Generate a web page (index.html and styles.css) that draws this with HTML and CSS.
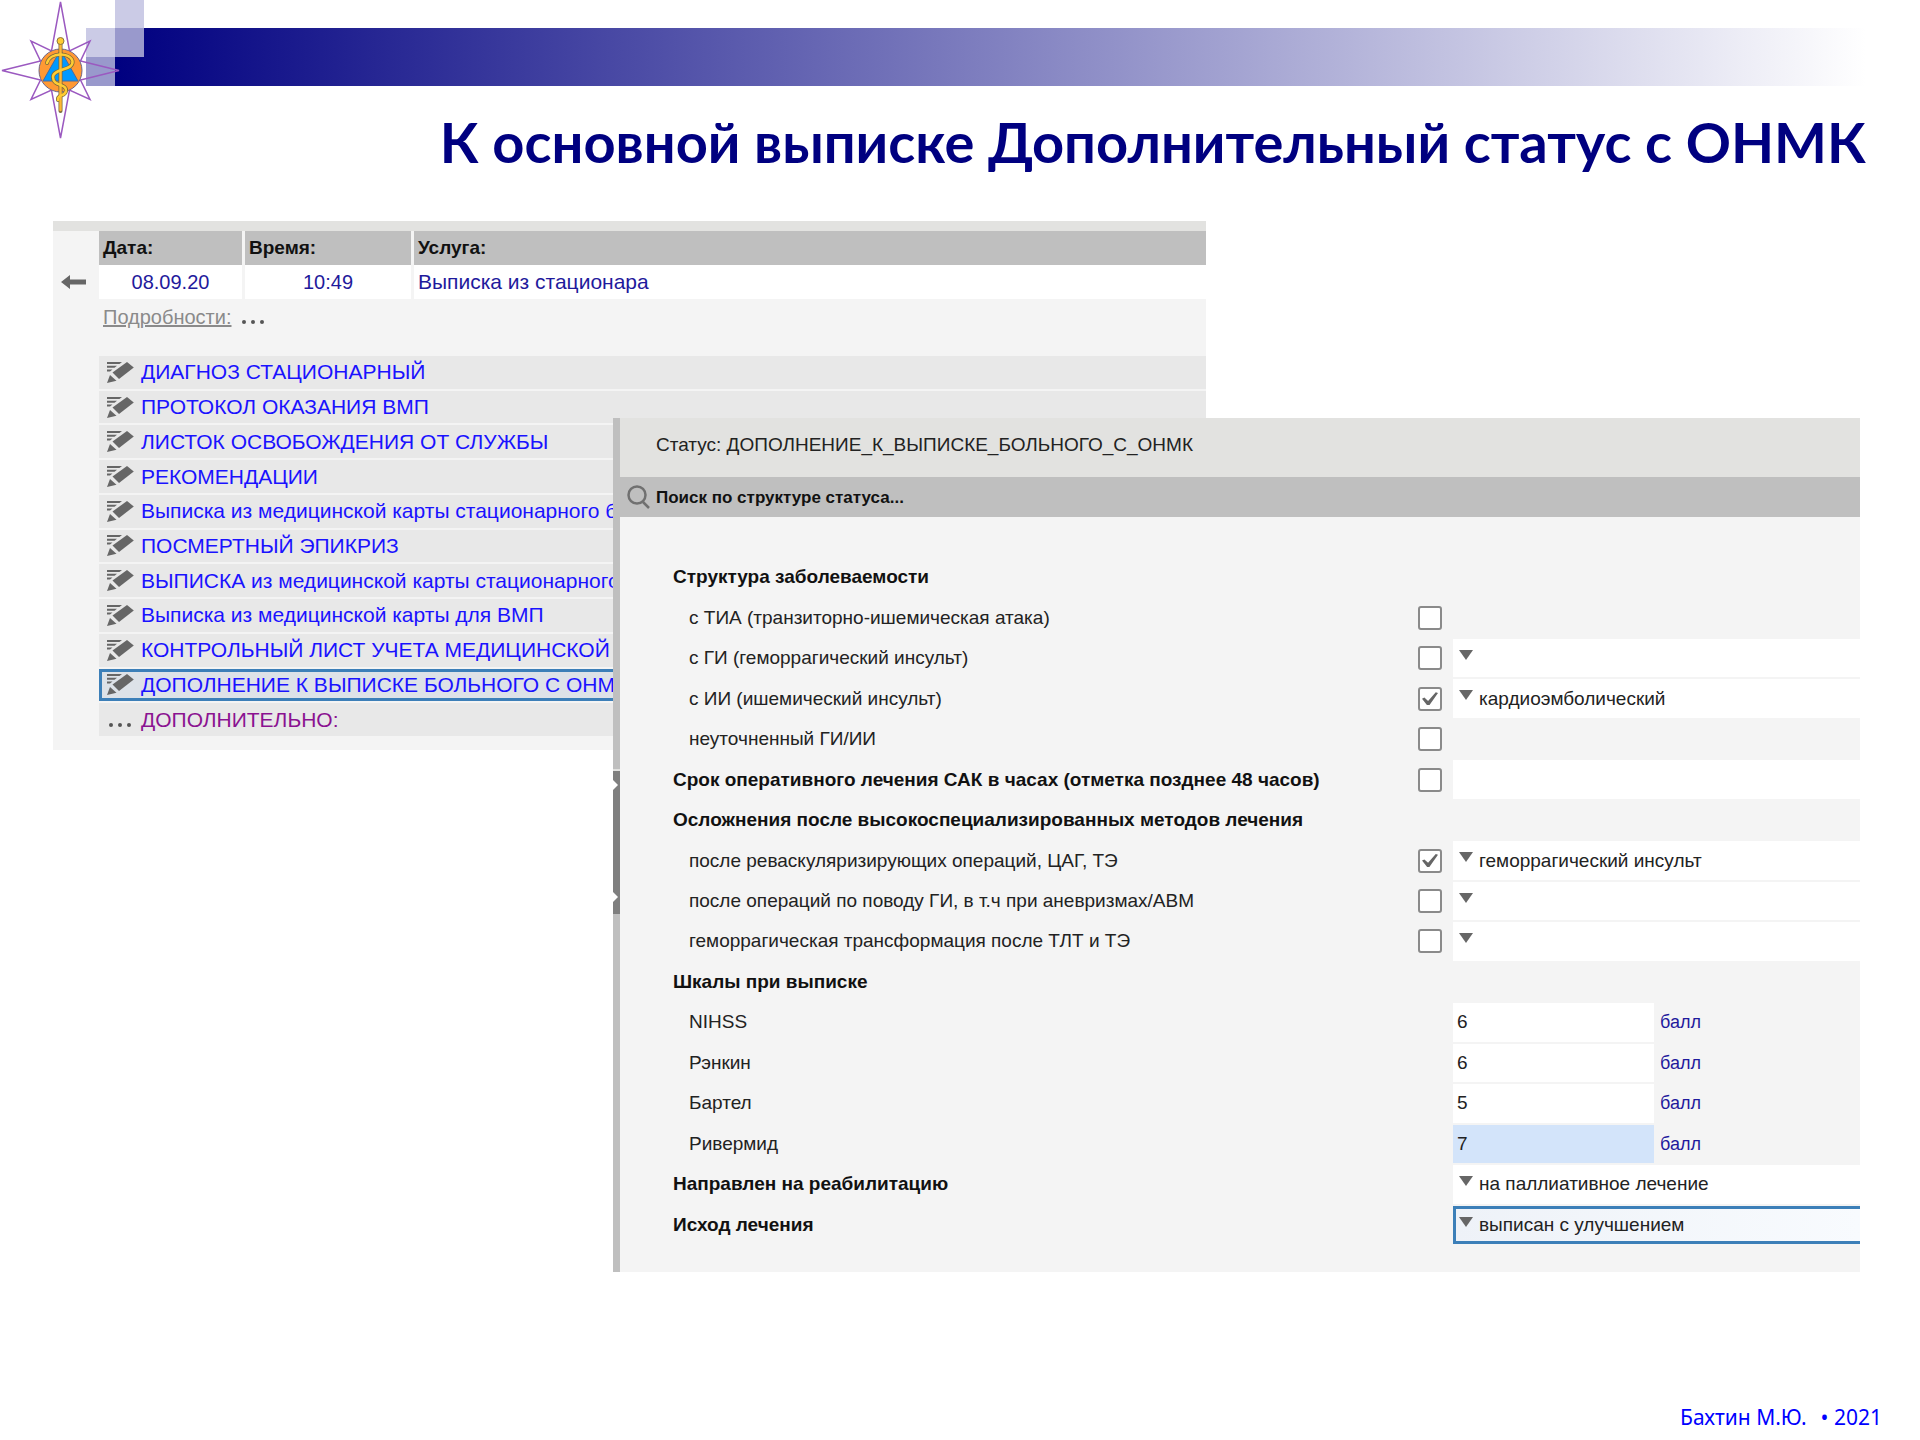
FILE: index.html
```html
<!DOCTYPE html>
<html lang="ru">
<head>
<meta charset="utf-8">
<title>К основной выписке Дополнительный статус с ОНМК</title>
<link rel="stylesheet" href="styles.css">
</head>
<body>
<svg width="0" height="0" class="defs" aria-hidden="true">
  <symbol id="edit" viewBox="0 0 27 21">
    <path d="M0 0h15l-2.500 2H0zM0 3.700h10l-2.500 2H0zM0 7.400h5.500l-2.500 2H0z"/>
    <path d="M20 0L26.800 5.500L12 17L5.500 10.500z"/>
    <path d="M3 13L9.500 18.700L0 21z"/>
  </symbol>
  <symbol id="dots" viewBox="0 0 22 4">
    <circle cx="2" cy="2" r="2"/><circle cx="11" cy="2" r="2"/><circle cx="20" cy="2" r="2"/>
  </symbol>
  <symbol id="caret" viewBox="0 0 14 10"><path d="M0 0h14L7 10z"/></symbol>
</svg>

<header class="masthead">
  <div class="band"></div>
  <i class="sq sq-top"></i><i class="sq sq-left"></i><i class="sq sq-mid"></i><i class="sq sq-low"></i>
  <svg class="logo" viewBox="0 0 121 140" aria-hidden="true">
    <path class="star" d="M60.500 2L69.500 51L90 41L80.500 61L119 70.500L80.500 80L90 99.500L69.500 90L60.500 138L51.500 90L31 99.500L40.500 80L2 70.500L40.500 61L31 41L51.500 51z"/>
    <circle cx="60.500" cy="70.500" r="21.500" fill="#ff9933" stroke="#6b6488"/>
    <path d="M60.500 50L78 81H43z" fill="#0099ff" stroke="#4a6aa0"/>
    <g fill="none" stroke-linecap="round">
      <path d="M60.500 42V111" stroke="#7a6a3c" stroke-width="4"/>
      <path d="M47 63C50 52 70 52 72.500 61C74 71 53 68 53 77C53 87 67 83 66 91C65 97 57 94 58 100" stroke="#7a6a3c" stroke-width="4"/>
      <path d="M60.500 42V110" stroke="#ffb733" stroke-width="2.500"/>
      <path d="M47 63C50 52 70 52 72.500 61C74 71 53 68 53 77C53 87 67 83 66 91C65 97 57 94 58 100" stroke="#ffcc33" stroke-width="2.500"/>
    </g>
    <circle cx="60.500" cy="41" r="3.500" fill="#ffcc33" stroke="#8a7440"/>
  </svg>
</header>

<h1 class="title">К основной выписке Дополнительный статус с ОНМК</h1>

<main class="stage">
  <section class="visit">
    <table class="visit-table">
      <thead><tr><td class="nav"></td><th class="date">Дата:</th><th class="time">Время:</th><th>Услуга:</th></tr></thead>
      <tbody><tr>
        <td class="nav"><button class="back" type="button" aria-label="Назад"><svg width="25" height="14" viewBox="0 0 25 14"><path d="M0 7L9 0V4.500H25V9.500H9V14z"/></svg></button></td>
        <td class="date center">08.09.20</td><td class="time center">10:49</td><td>Выписка из стационара</td>
      </tr></tbody>
    </table>
    <div class="details"><a href="#details">Подробности:</a><svg class="dots"><use href="#dots"/></svg></div>
    <ul class="docs">
      <li><svg class="edit"><use href="#edit"/></svg><a href="#d1">ДИАГНОЗ СТАЦИОНАРНЫЙ</a></li>
      <li><svg class="edit"><use href="#edit"/></svg><a href="#d2">ПРОТОКОЛ ОКАЗАНИЯ ВМП</a></li>
      <li><svg class="edit"><use href="#edit"/></svg><a href="#d3">ЛИСТОК ОСВОБОЖДЕНИЯ ОТ СЛУЖБЫ</a></li>
      <li><svg class="edit"><use href="#edit"/></svg><a href="#d4">РЕКОМЕНДАЦИИ</a></li>
      <li><svg class="edit"><use href="#edit"/></svg><a href="#d5">Выписка из медицинской карты стационарного больного</a></li>
      <li><svg class="edit"><use href="#edit"/></svg><a href="#d6">ПОСМЕРТНЫЙ ЭПИКРИЗ</a></li>
      <li><svg class="edit"><use href="#edit"/></svg><a href="#d7">ВЫПИСКА из медицинской карты стационарного</a></li>
      <li><svg class="edit"><use href="#edit"/></svg><a href="#d8">Выписка из медицинской карты для ВМП</a></li>
      <li><svg class="edit"><use href="#edit"/></svg><a href="#d9">КОНТРОЛЬНЫЙ ЛИСТ УЧЕТА МЕДИЦИНСКОЙ</a></li>
      <li class="current"><svg class="edit"><use href="#edit"/></svg><a href="#d10">ДОПОЛНЕНИЕ К ВЫПИСКЕ БОЛЬНОГО С ОНМК</a></li>
      <li class="more"><svg class="dots"><use href="#dots"/></svg><a href="#d11">ДОПОЛНИТЕЛЬНО:</a></li>
    </ul>
  </section>

  <section class="status">
    <div class="splitter"><div class="grip">
      <svg width="5" height="10" viewBox="0 0 5 10"><path d="M0 0L5 5L0 10z"/></svg>
      <svg width="5" height="10" viewBox="0 0 5 10"><path d="M0 0L5 5L0 10z"/></svg>
    </div></div>
    <form class="status-body">
      <h2 class="status-name">Статус: ДОПОЛНЕНИЕ_К_ВЫПИСКЕ_БОЛЬНОГО_С_ОНМК</h2>
      <div class="search">
        <svg width="24" height="24" viewBox="0 0 24 24"><circle cx="10" cy="10" r="8.500"/><path d="M16 17L22 23"/></svg>
        <input type="text" aria-label="Поиск" placeholder="Поиск по структуре статуса...">
      </div>
      <div class="fields">
        <div class="row"><h3>Структура заболеваемости</h3></div>
        <div class="row"><label class="sub" for="c1">с ТИА (транзиторно-ишемическая атака)</label><input class="check" type="checkbox" id="c1"></div>
        <div class="row"><label class="sub" for="c2">с ГИ (геморрагический инсульт)</label><input class="check" type="checkbox" id="c2">
          <div class="combo"><select aria-label="Тип ГИ"><option></option></select><svg><use href="#caret"/></svg></div></div>
        <div class="row"><label class="sub" for="c3">с ИИ (ишемический инсульт)</label><input class="check" type="checkbox" id="c3" checked>
          <div class="combo"><select aria-label="Тип ИИ"><option>кардиоэмболический</option></select><svg><use href="#caret"/></svg></div></div>
        <div class="row"><label class="sub" for="c4">неуточненный ГИ/ИИ</label><input class="check" type="checkbox" id="c4"></div>
        <div class="row"><label class="main" for="c5">Срок оперативного лечения САК в часах (отметка позднее 48 часов)</label><input class="check" type="checkbox" id="c5">
          <input class="text" type="text" aria-label="Срок в часах"></div>
        <div class="row"><h3>Осложнения после высокоспециализированных методов лечения</h3></div>
        <div class="row"><label class="sub" for="c6">после реваскуляризирующих операций, ЦАГ, ТЭ</label><input class="check" type="checkbox" id="c6" checked>
          <div class="combo"><select aria-label="Осложнение после операций"><option>геморрагический инсульт</option></select><svg><use href="#caret"/></svg></div></div>
        <div class="row"><label class="sub" for="c7">после операций по поводу ГИ, в т.ч при аневризмах/АВМ</label><input class="check" type="checkbox" id="c7">
          <div class="combo"><select aria-label="Осложнение при аневризмах"><option></option></select><svg><use href="#caret"/></svg></div></div>
        <div class="row"><label class="sub" for="c8">геморрагическая трансформация после ТЛТ и ТЭ</label><input class="check" type="checkbox" id="c8">
          <div class="combo"><select aria-label="Трансформация"><option></option></select><svg><use href="#caret"/></svg></div></div>
        <div class="row"><h3>Шкалы при выписке</h3></div>
        <div class="row"><label class="sub" for="s1">NIHSS</label><div class="score"><input class="text" type="text" id="s1" value="6"><span>балл</span></div></div>
        <div class="row"><label class="sub" for="s2">Рэнкин</label><div class="score"><input class="text" type="text" id="s2" value="6"><span>балл</span></div></div>
        <div class="row"><label class="sub" for="s3">Бартел</label><div class="score"><input class="text" type="text" id="s3" value="5"><span>балл</span></div></div>
        <div class="row"><label class="sub" for="s4">Ривермид</label><div class="score"><input class="text hover" type="text" id="s4" value="7"><span>балл</span></div></div>
        <div class="row"><label class="main" for="r1">Направлен на реабилитацию</label>
          <div class="combo"><select id="r1"><option>на паллиативное лечение</option></select><svg><use href="#caret"/></svg></div></div>
        <div class="row"><label class="main" for="r2">Исход лечения</label>
          <div class="combo active"><select id="r2"><option>выписан с улучшением</option></select><svg><use href="#caret"/></svg></div></div>
      </div>
    </form>
  </section>
</main>

<footer class="footer"><span>Бахтин М.Ю.</span><span>• 2021</span></footer>
</body>
</html>
```
FILE: styles.css
```css
* { box-sizing: border-box; }

body {
  margin: 0;
  min-height: 100vh;
  display: flex;
  flex-direction: column;
  background: #fff;
  color: #222;
  font: 19px/24px "Liberation Sans", Arial, sans-serif;
}

.defs { position: absolute; }

/* masthead */
.masthead {
  position: relative;
  display: grid;
  grid-template-columns: 86px 29px 29px 1fr;
  grid-template-rows: 28px 29px 29px;
}
.band {
  grid-area: 2 / 3 / 4 / 5;
  background: linear-gradient(90deg, #000080, #fff 97%);
}
.sq-top { grid-area: 1 / 3; background: #cbcbe6; }
.sq-left { grid-area: 2 / 2; background: #cbcbe6; }
.sq-mid { grid-area: 2 / 3; background: #9999cc; }
.sq-low { grid-area: 3 / 2; background: #9999cc; }
.logo {
  position: absolute;
  left: 0;
  top: 0;
  width: 121px;
  height: 140px;
}
.star { fill: none; stroke: #9b59c0; stroke-width: 1.5; }

.title {
  margin: 20px 54px 0;
  font: bold 56px/72px Lato, Carlito, Calibri, sans-serif;
  color: #000080;
  text-align: right;
}

/* two overlapping windows */
.stage {
  display: grid;
  grid-template-columns: 53fr 560fr 593fr 654fr 60fr;
  grid-template-rows: 197px auto;
  margin-top: 43px;
}

.visit {
  grid-area: 1 / 2 / 3 / 4;
  align-self: start;
  min-width: 0;
  padding-bottom: 14px;
  border-top: 10px solid #e2e2e0;
  background: #f4f4f4;
  font-size: 21px;
}
.visit-table {
  width: 100%;
  border-spacing: 0;
  table-layout: fixed;
  font-size: 21px;
}
.visit-table th, .visit-table td {
  height: 34px;
  padding: 0 4px;
  text-align: left;
  border-right: 3px solid #f4f4f4;
}
.visit-table th { background: #bfbfbf; color: #111; font-size: 19px; }
.visit-table td { background: #fff; color: #1f1a9c; }
.visit-table th:last-child, .visit-table td:last-child { border-right: 0; }
.visit-table .nav { width: 46px; padding: 0; border: 0; background: none; }
.visit-table .date { width: 146px; }
.visit-table .time { width: 169px; }
.visit-table .center { text-align: center; font-size: 20px; }
.back {
  display: flex;
  margin-left: 8px;
  padding: 0;
  border: 0;
  background: none;
  fill: #666;
}
.details {
  display: flex;
  align-items: center;
  gap: 10px;
  height: 36px;
  padding-left: 50px;
}
.details a { color: #8a8a8a; font-size: 20px; }
.dots { width: 22px; height: 4px; fill: #555; transform: translateY(5px); }

.docs {
  display: grid;
  grid-auto-rows: 1fr;
  gap: 2px;
  height: 380px;
  margin: 21px 0 0 46px;
  padding: 0;
  list-style: none;
}
.docs li {
  display: flex;
  align-items: center;
  gap: 7px;
  min-height: 0;
  padding-left: 8px;
  background: #e8e8e8;
  white-space: nowrap;
  overflow: hidden;
}
.docs a { color: #1a12ff; text-decoration: none; }
.docs .edit { width: 27px; height: 21px; flex: none; fill: #666; }
.docs .dots { margin: 0 3px 0 2px; flex: none; }
.docs .current {
  padding-left: 5px;
  border: 3px solid #3c7fb8;
  background: #dde2e8;
}
.docs .more a { color: #8b1391; }

.status {
  grid-area: 2 / 3 / 3 / 5;
  z-index: 1;
  display: flex;
  min-width: 0;
  background: #f4f4f4;
}
.splitter { width: 7px; flex: none; padding-top: 351px; background: #bfbfbf; }
.grip {
  display: flex;
  flex-direction: column;
  justify-content: space-between;
  height: 145px;
  padding: 9px 0 12px;
  border-top: 2px solid #e2e2e0;
  background: #7f7f7f;
  fill: #fff;
}
.status-body { flex: 1; min-width: 0; padding-bottom: 28px; }
.status-name {
  margin: 0;
  padding: 15px 36px 20px;
  background: #e2e2e0;
  font-size: 19px;
  font-weight: normal;
}
.search {
  display: flex;
  align-items: center;
  gap: 5px;
  height: 40px;
  padding-left: 7px;
  background: #bfbfbf;
}
.search svg { fill: none; stroke: #707070; stroke-width: 2.5; }
.search input {
  flex: 1;
  padding: 2px 0 0;
  border: 0;
  background: none;
  font: bold 17px/24px "Liberation Sans", Arial, sans-serif;
}
.search input::placeholder { color: #111; opacity: 1; }

.fields {
  display: grid;
  grid-auto-rows: 1fr;
  gap: 2px;
  height: 686px;
  margin-top: 41px;
  padding-left: 53px;
}
.row {
  display: grid;
  grid-template-columns: 1fr 24px 407px;
  column-gap: 11px;
  align-items: center;
  min-height: 0;
}
.row h3, .row .main { margin: 0; font-size: 19px; font-weight: bold; color: #111; }
.row .sub { padding-left: 16px; }
.row h3, .row label { grid-column: 1; white-space: nowrap; }

.check {
  appearance: none;
  display: grid;
  place-items: center;
  width: 24px;
  height: 24px;
  margin: 0;
  border: 2px solid #8a8a8a;
  border-radius: 3px;
  background: #fff;
}
.check:checked::before {
  content: "";
  width: 16px;
  height: 13px;
  background: #666;
  clip-path: polygon(0 50%, 15% 42%, 38% 68%, 86% 0, 100% 6%, 46% 100%, 32% 100%);
}

.combo, .score, .row > .text { grid-column: 3; height: 100%; min-height: 0; }
.combo { display: grid; background: #fff; }
.combo select, .combo svg { grid-area: 1 / 1; }
.combo select {
  appearance: none;
  min-height: 0;
  padding: 0 0 0 26px;
  border: 0;
  background: none;
  color: #222;
  font: 19px/24px "Liberation Sans", Arial, sans-serif;
}
.combo svg {
  width: 14px;
  height: 10px;
  margin: 11px 0 0 6px;
  fill: #666;
  pointer-events: none;
}
.combo.active {
  border: 3px solid #3c7fb8;
  border-right: 0;
  background: linear-gradient(90deg, #eef2f8, #f8fbfe);
}
.combo.active select { padding-left: 23px; }
.combo.active svg { margin: 8px 0 0 3px; }

.text {
  width: 100%;
  height: 100%;
  padding: 0 4px;
  border: 0;
  background: #fff;
  color: #222;
  font: 19px/24px "Liberation Sans", Arial, sans-serif;
}
.text.hover { background: #d3e4fa; }
.score {
  display: grid;
  grid-template-columns: 201px auto;
  justify-content: start;
  align-items: center;
  column-gap: 6px;
  color: #1f1a9c;
  font-size: 18px;
}

.footer {
  display: flex;
  justify-content: flex-end;
  gap: 14px;
  margin-top: auto;
  padding: 0 38px 9px 0;
  color: #0000ff;
  font: 21px/28px "Noto Sans", Tahoma, sans-serif;
}
```
